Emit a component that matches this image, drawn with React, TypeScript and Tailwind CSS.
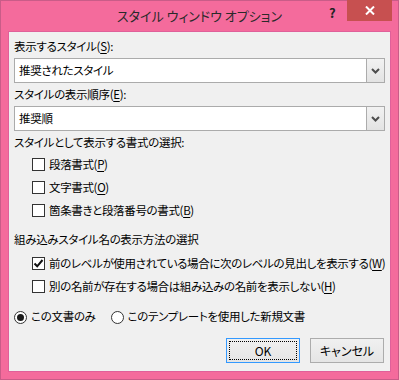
import type { ReactNode } from "react";

const font = {
  fontFamily: '"Noto Sans CJK JP", "Noto Sans", sans-serif',
};

const Key = ({ k }: { k: string }) => (
  <>
    (<span className="underline underline-offset-2">{k}</span>)
  </>
);

const Select = ({ value }: { value: string }) => (
  <div className="mt-[1px] h-[25px] flex border border-[#ababab] bg-white">
    <div className="flex-1 flex items-center pl-[4px] text-[11.5px] text-black">
      {value}
    </div>
    <div className="w-[18px] flex items-center justify-center border-l border-[#acacac] bg-gradient-to-b from-[#f2f2f2] to-[#e3e3e3]">
      <svg width="9" height="6" viewBox="0 0 9 6">
        <path d="M1 1 L4.5 4.5 L8 1" fill="none" stroke="#4d4d4d" strokeWidth="2" />
      </svg>
    </div>
  </div>
);

const Check = ({ checked, children }: { checked?: boolean; children: ReactNode }) => (
  <div className="h-[23px] flex items-center pl-[18px]">
    <div className="w-[13px] h-[13px] border border-[#333333] bg-white flex items-center justify-center">
      {checked && (
        <svg width="11" height="11" viewBox="0 0 11 11">
          <path d="M1.5 5.5 L4.2 8.3 L9.5 2" fill="none" stroke="#111" strokeWidth="2" />
        </svg>
      )}
    </div>
    <span className="ml-[4px] text-[11.5px] tracking-[-0.35px] text-black whitespace-nowrap">
      {children}
    </span>
  </div>
);

const Radio = ({ checked, children }: { checked?: boolean; children: ReactNode }) => (
  <div className="flex items-center">
    <div className="w-[13px] h-[13px] rounded-full border border-[#333333] bg-white flex items-center justify-center">
      {checked && <div className="w-[7px] h-[7px] rounded-full bg-[#1a1a1a]" />}
    </div>
    <span className="ml-[4px] text-[11.5px] tracking-[-0.3px] text-black whitespace-nowrap">
      {children}
    </span>
  </div>
);

export default function App() {
  return (
    <div
      style={font}
      className="w-[399px] h-[380px] bg-[#f46b9c] border border-[#c95c88] flex flex-col [font-feature-settings:'palt']"
    >
      {/* Title bar */}
      <div className="relative h-[30px] flex items-center justify-center">
        <span className="text-[13px] text-[#2a2a2a] -mt-[1px] whitespace-nowrap">
          スタイル ウィンドウ オプション
        </span>
        <span className="absolute left-[328px] top-[2px] text-[13px] font-bold text-[#222]">
          ?
        </span>
        <div className="absolute left-[346px] top-[-1px] w-[45px] h-[21px] bg-[#c75050] flex items-center justify-center">
          <svg width="10" height="9" viewBox="0 0 10 9">
            <path d="M1 0.5 L9 8.5 M9 0.5 L1 8.5" stroke="#fff" strokeWidth="2" />
          </svg>
        </div>
      </div>

      {/* Body */}
      <div className="mx-[7px] h-[341px] bg-[#f0f0f0] border border-[#e0609a] px-[5px] pt-[5px] flex flex-col text-[11.5px] tracking-[-0.3px]">
        <div className="h-[20px] flex items-center text-black">
          表示するスタイル<Key k="S" />:
        </div>
        <Select value="推奨されたスタイル" />

        <div className="mt-[2px] h-[20px] flex items-center text-black">
          スタイルの表示順序<Key k="E" />:
        </div>
        <Select value="推奨順" />

        <div className="mt-[2px] h-[20px] flex items-center text-black">
          スタイルとして表示する書式の選択:
        </div>
        <Check>
          段落書式<Key k="P" />
        </Check>
        <Check>
          文字書式<Key k="O" />
        </Check>
        <Check>
          箇条書きと段落番号の書式<Key k="B" />
        </Check>

        <div className="mt-[8px] h-[20px] flex items-center text-black">
          組み込みスタイル名の表示方法の選択
        </div>
        <div className="mt-[2px]">
          <Check checked>
            前のレベルが使用されている場合に次のレベルの見出しを表示する<Key k="W" />
          </Check>
          <Check>
            別の名前が存在する場合は組み込みの名前を表示しない<Key k="H" />
          </Check>
        </div>

        <div className="mt-[9px] h-[20px] flex items-center gap-[15px]">
          <Radio checked>この文書のみ</Radio>
          <Radio>このテンプレートを使用した新規文書</Radio>
        </div>

        <div className="mt-[11px] flex justify-end gap-[10px] pr-[1px] tracking-normal">
          <div className="w-[74px] h-[25px] border border-[#3399ff] bg-gradient-to-b from-[#f0f0f0] to-[#e5e5e5] p-[2px]">
            <div className="w-full h-full border border-dotted border-black flex items-center justify-center text-[12px] text-black">
              OK
            </div>
          </div>
          <div className="w-[74px] h-[25px] border border-[#acacac] bg-gradient-to-b from-[#f0f0f0] to-[#e5e5e5] flex items-center justify-center text-[12px] text-black">
            キャンセル
          </div>
        </div>
      </div>
    </div>
  );
}
